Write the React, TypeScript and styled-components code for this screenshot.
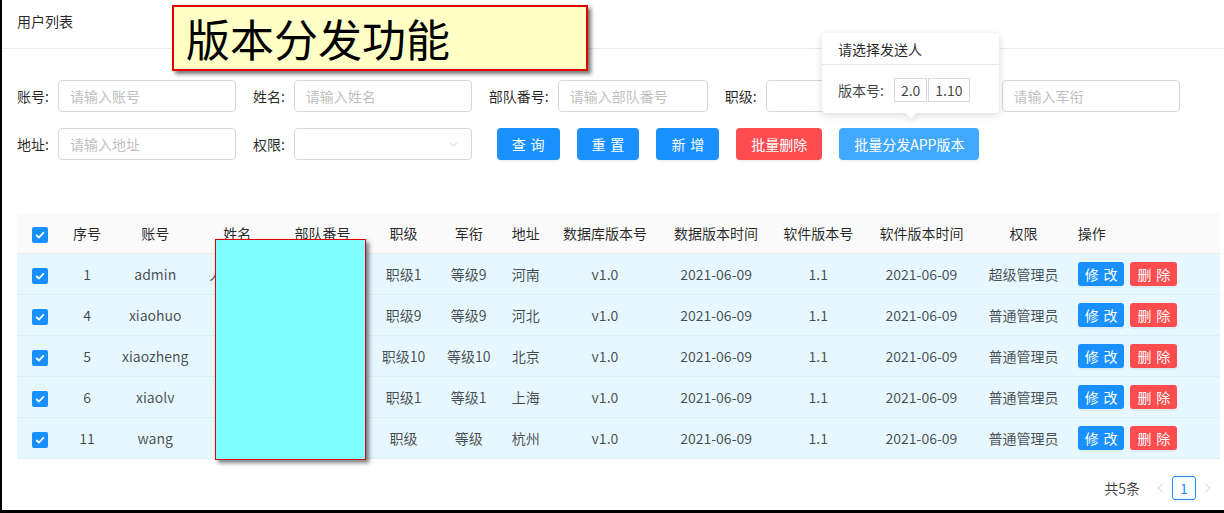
import { FunctionComponent } from 'react';
import styled, { createGlobalStyle } from 'styled-components';
import { ChevronDown, ChevronLeft, ChevronRight } from 'lucide-react';

const GlobalStyle = createGlobalStyle`
  html, body {
    margin: 0;
    padding: 0;
    background: #fff;
  }
  body {
    font-family: 'Noto Sans CJK SC', 'Noto Sans', sans-serif;
    font-size: 14px;
    color: rgba(0, 0, 0, 0.65);
  }
  * { box-sizing: border-box; }
`;

const Frame = styled.div`
  position: relative;
  width: 1224px;
  height: 513px;
  border-left: 2px solid #000;
  border-bottom: 3px solid #000;
  background: #fff;
  overflow: hidden;
`;

const CardHead = styled.div`
  height: 49px;
  padding: 11px 0 0 15px;
  border-bottom: 1px solid #ebebeb;
  color: rgba(0, 0, 0, 0.85);
  line-height: 20px;
`;

const Body = styled.div`
  padding: 31px 4px 0 15px;
`;

const Form = styled.div`
  display: flex;
  flex-direction: column;
  gap: 16px;
`;

const FormRow = styled.div`
  display: flex;
  align-items: center;
  height: 32px;
`;

const Item = styled.div`
  display: flex;
  align-items: center;
  margin-right: 17px;
`;

const Label = styled.label`
  color: rgba(0, 0, 0, 0.85);
  margin-right: 9px;
  white-space: nowrap;
`;

const Input = styled.input<{ $w: number }>`
  width: ${(p) => p.$w}px;
  height: 32px;
  padding: 4px 11px;
  border: 1px solid #d9d9d9;
  border-radius: 4px;
  font: inherit;
  color: rgba(0, 0, 0, 0.65);
  outline: none;
  &::placeholder { color: #bfbfbf; }
`;

const Select = styled.div<{ $w: number }>`
  width: ${(p) => p.$w}px;
  height: 32px;
  border: 1px solid #d9d9d9;
  border-radius: 4px;
  display: flex;
  align-items: center;
  justify-content: flex-end;
  padding-right: 11px;
  color: #bfbfbf;
`;

const Buttons = styled.div`
  display: flex;
  gap: 17px;
  margin-left: 8px;
`;

const Button = styled.button<{ $kind?: 'primary' | 'danger' | 'light'; $small?: boolean }>`
  height: ${(p) => (p.$small ? 24 : 32)}px;
  padding: 0 ${(p) => (p.$small ? 7 : 15)}px;
  border: none;
  border-radius: ${(p) => (p.$small ? 3 : 4)}px;
  font: inherit;
  font-size: 14px;
  color: #fff;
  cursor: pointer;
  white-space: nowrap;
  background: ${(p) =>
    p.$kind === 'danger' ? '#ff4d4f' : p.$kind === 'light' ? '#40a9ff' : '#1890ff'};
  box-shadow: 0 2px 0 rgba(0, 0, 0, 0.045);
`;

const Spaced = styled.span`
  letter-spacing: 0.34em;
  margin-right: -0.34em;
`;

const Table = styled.table`
  margin-top: 53px;
  width: 1203px;
  table-layout: fixed;
  border-collapse: collapse;
`;

const Th = styled.th<{ $left?: boolean }>`
  height: 40px;
  padding: ${(p) => (p.$left ? '0 0 0 11px' : '0 8px')};
  background: #fafafa;
  border-bottom: 1px solid #ececec;
  font-weight: 400;
  color: rgba(0, 0, 0, 0.85);
  text-align: ${(p) => (p.$left ? 'left' : 'center')};
  white-space: nowrap;
`;

const Tr = styled.tr`
  background: #e6f7ff;
`;

const Td = styled.td<{ $left?: boolean }>`
  height: 41px;
  padding: ${(p) => (p.$left ? '0 0 0 11px' : '0 4px')};
  border-bottom: 1px solid #dceef8;
  text-align: ${(p) => (p.$left ? 'left' : 'center')};
  white-space: nowrap;
  overflow: hidden;
  color: rgba(0, 0, 0, 0.7);
`;

const Actions = styled.div`
  display: flex;
  gap: 6px;
`;

const CheckBox = styled.span`
  display: inline-flex;
  width: 16px;
  height: 16px;
  border-radius: 2px;
  background: #1890ff;
  align-items: center;
  justify-content: center;
  vertical-align: middle;
`;

const Pager = styled.div`
  display: flex;
  justify-content: flex-end;
  align-items: center;
  margin-top: 17px;
  height: 24px;
  color: rgba(0, 0, 0, 0.75);
`;

const Total = styled.span`
  margin-right: 8px;
`;

const PageArrow = styled.span`
  display: inline-flex;
  width: 24px;
  justify-content: center;
  color: #c0c0c0;
`;

const PageItem = styled.span`
  display: inline-flex;
  width: 24px;
  height: 24px;
  align-items: center;
  justify-content: center;
  border: 1px solid #1890ff;
  border-radius: 3px;
  color: #1890ff;
`;

const Note = styled.div`
  position: absolute;
  left: 170px;
  top: 5px;
  width: 416px;
  height: 66px;
  border: 2px solid #e00000;
  background: #ffffc6;
  box-shadow: 3px 3px 4px rgba(0, 0, 0, 0.55);
  padding: 4px 0 0 12px;
  font-size: 44px;
  line-height: 54px;
  color: #000;
`;

const Mask = styled.div`
  position: absolute;
  left: 213px;
  top: 239px;
  width: 151px;
  height: 221px;
  border: 1px solid #e00000;
  background: #80ffff;
  box-shadow: 3px 3px 4px rgba(0, 0, 0, 0.5);
`;

const Popover = styled.div`
  position: absolute;
  left: 820px;
  top: 33px;
  width: 177px;
  height: 80px;
  background: #fff;
  border-radius: 4px;
  box-shadow: 0 2px 8px rgba(0, 0, 0, 0.15);
  &::after {
    content: '';
    position: absolute;
    left: 85px;
    bottom: -4px;
    width: 8px;
    height: 8px;
    background: #fff;
    transform: rotate(45deg);
    box-shadow: 3px 3px 7px rgba(0, 0, 0, 0.07);
  }
`;

const PopTitle = styled.div`
  height: 32px;
  padding: 5px 16px 0;
  border-bottom: 1px solid #e8e8e8;
  color: rgba(0, 0, 0, 0.85);
  line-height: 22px;
`;

const PopBody = styled.div`
  display: flex;
  align-items: center;
  padding: 13px 16px 0;
  color: rgba(0, 0, 0, 0.75);
`;

const PopLabel = styled.span`
  margin-right: 10px;
`;

const Version = styled.span`
  display: inline-flex;
  height: 24px;
  padding: 0 6px;
  align-items: center;
  border: 1px solid #d9d9d9;
  margin-right: 1px;
`;

const columns = [
  ['', 46], ['序号', 48], ['账号', 88], ['姓名', 76], ['部队番号', 94], ['职级', 68],
  ['军衔', 62], ['地址', 52], ['数据库版本号', 106], ['数据版本时间', 116],
  ['软件版本号', 88], ['软件版本时间', 118], ['权限', 86], ['操作', 153],
] as const;

const rows = [
  { id: 1, account: 'admin', name: '人事管理', unit: '一连', rank: '职级1', grade: '等级9', addr: '河南', role: '超级管理员' },
  { id: 4, account: 'xiaohuo', name: '小火', unit: '二连', rank: '职级9', grade: '等级9', addr: '河北', role: '普通管理员' },
  { id: 5, account: 'xiaozheng', name: '小郑', unit: '三连', rank: '职级10', grade: '等级10', addr: '北京', role: '普通管理员' },
  { id: 6, account: 'xiaolv', name: '小吕', unit: '四连', rank: '职级1', grade: '等级1', addr: '上海', role: '普通管理员' },
  { id: 11, account: 'wang', name: '王', unit: '五连', rank: '职级', grade: '等级', addr: '杭州', role: '普通管理员' },
];

const Check: FunctionComponent = () => (
  <CheckBox>
    <svg width='10' height='8' viewBox='0 0 10 8'>
      <polyline points='1.2,4 4,6.6 8.8,1.4' fill='none' stroke='#fff' strokeWidth='1.8' />
    </svg>
  </CheckBox>
);

const App: FunctionComponent = () => {
  return (
    <Frame>
      <GlobalStyle />
      <CardHead>用户列表</CardHead>
      <Body>
        <Form>
          <FormRow>
            <Item><Label>账号:</Label><Input $w={178} placeholder='请输入账号' /></Item>
            <Item><Label>姓名:</Label><Input $w={178} placeholder='请输入姓名' /></Item>
            <Item><Label>部队番号:</Label><Input $w={150} placeholder='请输入部队番号' /></Item>
            <Item><Label>职级:</Label><Input $w={178} /></Item>
            <Item><Label>军衔:</Label><Input $w={178} placeholder='请输入军衔' /></Item>
          </FormRow>
          <FormRow>
            <Item><Label>地址:</Label><Input $w={178} placeholder='请输入地址' /></Item>
            <Item>
              <Label>权限:</Label>
              <Select $w={178}><ChevronDown size={13} strokeWidth={1.3} /></Select>
            </Item>
            <Buttons>
              <Button><Spaced>查询</Spaced></Button>
              <Button><Spaced>重置</Spaced></Button>
              <Button><Spaced>新增</Spaced></Button>
              <Button $kind='danger'>批量删除</Button>
              <Button $kind='light'>批量分发APP版本</Button>
            </Buttons>
          </FormRow>
        </Form>

        <Table>
          <colgroup>
            {columns.map(([, w], i) => <col key={i} style={{ width: w }} />)}
          </colgroup>
          <thead>
            <tr>
              {columns.map(([title], i) => (
                <Th key={i} $left={i === columns.length - 1}>
                  {i === 0 ? <Check /> : title}
                </Th>
              ))}
            </tr>
          </thead>
          <tbody>
            {rows.map((r) => (
              <Tr key={r.id}>
                <Td><Check /></Td>
                <Td>{r.id}</Td>
                <Td>{r.account}</Td>
                <Td>{r.name}</Td>
                <Td>{r.unit}</Td>
                <Td>{r.rank}</Td>
                <Td>{r.grade}</Td>
                <Td>{r.addr}</Td>
                <Td>v1.0</Td>
                <Td>2021-06-09</Td>
                <Td>1.1</Td>
                <Td>2021-06-09</Td>
                <Td>{r.role}</Td>
                <Td $left>
                  <Actions>
                    <Button $small><Spaced>修改</Spaced></Button>
                    <Button $small $kind='danger'><Spaced>删除</Spaced></Button>
                  </Actions>
                </Td>
              </Tr>
            ))}
          </tbody>
        </Table>

        <Pager>
          <Total>共5条</Total>
          <PageArrow><ChevronLeft size={14} strokeWidth={1.3} /></PageArrow>
          <PageItem>1</PageItem>
          <PageArrow><ChevronRight size={14} strokeWidth={1.3} /></PageArrow>
        </Pager>
      </Body>

      <Note>版本分发功能</Note>
      <Mask />
      <Popover>
        <PopTitle>请选择发送人</PopTitle>
        <PopBody>
          <PopLabel>版本号:</PopLabel>
          <Version>2.0</Version>
          <Version>1.10</Version>
        </PopBody>
      </Popover>
    </Frame>
  );
};

export default App;
